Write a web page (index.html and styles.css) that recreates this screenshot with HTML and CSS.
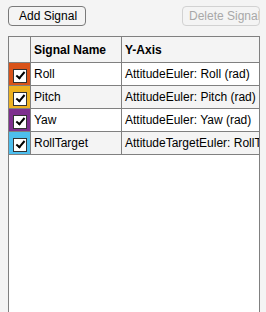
FILE: index.html
```html
<!DOCTYPE html>
<html lang="en">
<head>
    <meta charset="UTF-8">
    <title>Signals</title>
    <link rel="stylesheet" href="styles.css">
</head>
<body>
    <div class="toolbar">
        <button class="btn btn-add">Add Signal</button>
        <button class="btn btn-delete" disabled>Delete Signal</button>
    </div>

    <div class="table-wrap">
        <table class="signals">
            <thead>
                <tr>
                    <th class="col-color"></th>
                    <th class="col-name">Signal Name</th>
                    <th class="col-axis">Y-Axis</th>
                </tr>
            </thead>
            <tbody>
                <tr>
                    <td class="swatch roll"><span class="check"></span></td>
                    <td>Roll</td>
                    <td>AttitudeEuler: Roll (rad)</td>
                </tr>
                <tr class="alt">
                    <td class="swatch pitch"><span class="check"></span></td>
                    <td>Pitch</td>
                    <td>AttitudeEuler: Pitch (rad)</td>
                </tr>
                <tr>
                    <td class="swatch yaw"><span class="check"></span></td>
                    <td>Yaw</td>
                    <td>AttitudeEuler: Yaw (rad)</td>
                </tr>
                <tr class="alt">
                    <td class="swatch target"><span class="check"></span></td>
                    <td>RollTarget</td>
                    <td>AttitudeTargetEuler: RollTarget (rad)</td>
                </tr>
            </tbody>
        </table>
    </div>
</body>
</html>
```

FILE: styles.css
```css
body {
    margin: 0;
    background-color: #f4f4f4;
    font-family: 'Liberation Sans', Arial, sans-serif;
    font-size: 12px;
    color: #000;
    width: 266px;
    height: 312px;
    overflow: hidden;
}

.toolbar {
    display: flex;
    justify-content: space-between;
    padding: 6px 6px 0 8px;
}

.btn {
    width: 78px;
    height: 20px;
    border: 1px solid #7a7a7a;
    border-radius: 4px;
    background-color: #f4f4f4;
    font-family: inherit;
    font-size: 12px;
    text-align: left;
    white-space: nowrap;
    overflow: hidden;
    color: #000;
}

.btn-add {
    padding: 0 0 0 10px;
}

.btn-delete {
    padding: 0 0 0 6px;
}

.btn:disabled {
    border-color: #d2d2d2;
    color: #a8a8a8;
}

.table-wrap {
    margin: 10px 6px 0 8px;
    height: 275px;
    border: 1px solid #808080;
    border-bottom: none;
    background-color: #fff;
    overflow: hidden;
}

.signals {
    border-collapse: collapse;
    table-layout: fixed;
    width: 100%;
}

.signals th,
.signals td {
    border: 1px solid #808080;
    padding: 0 0 0 3px;
    text-align: left;
    white-space: nowrap;
    overflow: hidden;
}

.signals tr > :first-child {
    border-left: none;
}

.signals tr > :last-child {
    border-right: none;
}

.signals thead th {
    border-top: none;
    height: 25px;
    background-color: #f4f4f4;
    font-weight: bold;
}

.signals td {
    height: 22px;
}

.col-color {
    width: 18px;
}

.col-name {
    width: 87px;
}

.alt td {
    background-color: #f4f4f4;
}

.signals td.swatch {
    padding: 0;
    text-align: center;
}

.swatch.roll { background-color: #d95319; }
.swatch.pitch { background-color: #edb120; }
.swatch.yaw { background-color: #7e2f8e; }
.swatch.target { background-color: #4dbeee; }

.check {
    display: inline-block;
    position: relative;
    width: 12px;
    height: 12px;
    margin-top: 3px;
    border: 1px solid #333;
    background-color: #fff;
    vertical-align: top;
}

.check::after {
    content: "";
    position: absolute;
    left: 4px;
    top: 0;
    width: 3px;
    height: 7px;
    border: solid #000;
    border-width: 0 2px 2px 0;
    transform: rotate(40deg);
}
```
